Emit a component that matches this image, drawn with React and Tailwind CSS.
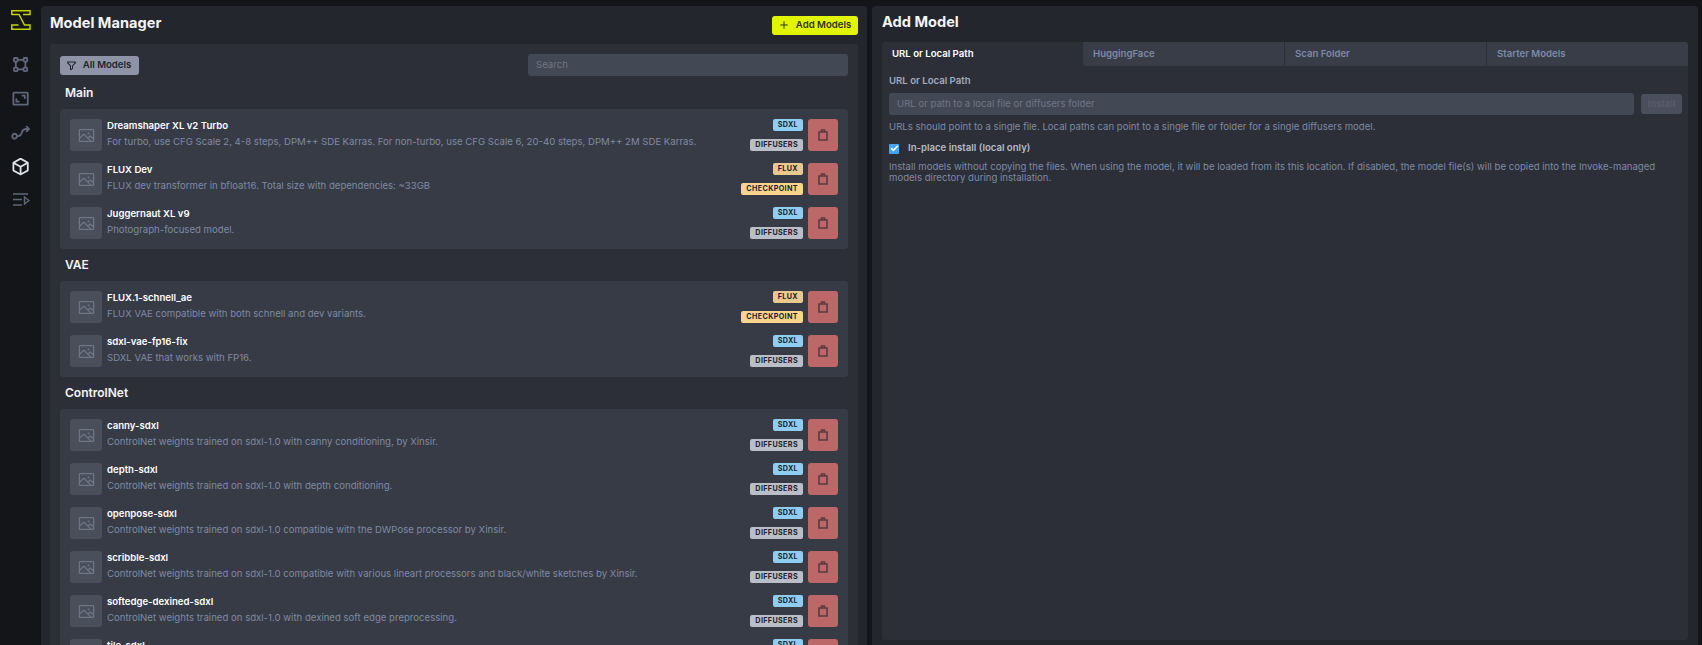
import React from 'react'
import { PiBoundingBoxBold, PiCubeBold, PiFlowArrowBold, PiFrameCornersBold, PiFunnelBold, PiImage, PiPlusBold } from 'react-icons/pi'
import { Check } from 'lucide-react'

const groups = [
  {
    title: 'Main',
    models: [
      { name: 'Dreamshaper XL v2 Turbo', desc: 'For turbo, use CFG Scale 2, 4-8 steps, DPM++ SDE Karras. For non-turbo, use CFG Scale 6, 20-40 steps, DPM++ 2M SDE Karras.', base: 'SDXL', format: 'DIFFUSERS' },
      { name: 'FLUX Dev', desc: 'FLUX dev transformer in bfloat16. Total size with dependencies: ~33GB', base: 'FLUX', format: 'CHECKPOINT' },
      { name: 'Juggernaut XL v9', desc: 'Photograph-focused model.', base: 'SDXL', format: 'DIFFUSERS' },
    ],
  },
  {
    title: 'VAE',
    models: [
      { name: 'FLUX.1-schnell_ae', desc: 'FLUX VAE compatible with both schnell and dev variants.', base: 'FLUX', format: 'CHECKPOINT' },
      { name: 'sdxl-vae-fp16-fix', desc: 'SDXL VAE that works with FP16.', base: 'SDXL', format: 'DIFFUSERS' },
    ],
  },
  {
    title: 'ControlNet',
    models: [
      { name: 'canny-sdxl', desc: 'ControlNet weights trained on sdxl-1.0 with canny conditioning, by Xinsir.', base: 'SDXL', format: 'DIFFUSERS' },
      { name: 'depth-sdxl', desc: 'ControlNet weights trained on sdxl-1.0 with depth conditioning.', base: 'SDXL', format: 'DIFFUSERS' },
      { name: 'openpose-sdxl', desc: 'ControlNet weights trained on sdxl-1.0 compatible with the DWPose processor by Xinsir.', base: 'SDXL', format: 'DIFFUSERS' },
      { name: 'scribble-sdxl', desc: 'ControlNet weights trained on sdxl-1.0 compatible with various lineart processors and black/white sketches by Xinsir.', base: 'SDXL', format: 'DIFFUSERS' },
      { name: 'softedge-dexined-sdxl', desc: 'ControlNet weights trained on sdxl-1.0 with dexined soft edge preprocessing.', base: 'SDXL', format: 'DIFFUSERS' },
      { name: 'tile-sdxl', desc: 'ControlNet weights trained on sdxl-1.0 with tile conditioning.', base: 'SDXL', format: 'DIFFUSERS' },
    ],
  },
]

const tagColors = {
  SDXL: 'bg-[#90cdf4]',
  FLUX: 'bg-[#e8c98f]',
  DIFFUSERS: 'bg-[#b9bec9]',
  CHECKPOINT: 'bg-[#fbd38d]',
}

function Tag({ label }) {
  return (
    <span className={`h-3 flex items-center px-[5px] rounded-[2px] text-[7.2px] leading-none font-bold tracking-[0.05em] text-[#1e222c] ${tagColors[label]}`}>
      {label}
    </span>
  )
}

function TrashIcon() {
  return (
    <svg width="10" height="12" viewBox="0 0 10 12" fill="none" stroke="currentColor" strokeWidth="1.6">
      <path d="M1 3 H9 V11 H1 Z M3.5 3 V1 H6.5 V3" />
    </svg>
  )
}

function ModelRow({ model }) {
  return (
    <div className="flex gap-[5px] h-8 shrink-0">
      <div className="w-8 h-8 shrink-0 rounded-[3px] bg-[#4a4f5c] flex items-center justify-center text-[#6f7686]">
        <PiImage size={19} />
      </div>
      <div className="flex-1 min-w-0 flex flex-col">
        <div className="text-[9.6px] leading-[12px] font-semibold text-white h-[14px] pt-[1px]">{model.name}</div>
        <div className="text-[9.6px] leading-[12px] text-[#7f8aa3] mt-[3px] truncate">{model.desc}</div>
      </div>
      <div className="flex flex-col items-end justify-between">
        <Tag label={model.base} />
        <Tag label={model.format} />
      </div>
      <button className="w-[30px] h-8 rounded-[3px] bg-[#bd6868] flex items-center justify-center text-[#5b3a40]">
        <TrashIcon />
      </button>
    </div>
  )
}

function Logo() {
  return (
    <svg width="20" height="20" viewBox="0 0 20 20" fill="none" stroke="#c4d400" strokeWidth="1.5">
      <path d="M0.8 5 V0.8 H19 V4.5 H12 M0.8 4.5 H8 L13.5 15 H19 V19.2 H0.8 V15 H7.5" />
    </svg>
  )
}

function QueueIcon() {
  return (
    <svg width="19" height="19" viewBox="0 0 19 19" fill="none" stroke="currentColor" strokeWidth="1.4">
      <path d="M2 4 H17 M2 9.5 H11 M2 15 H11" />
      <path d="M13.5 7 L18 10.5 L13.5 14 Z" />
    </svg>
  )
}

function App() {
  return (
    <div className="h-screen w-full overflow-hidden flex bg-[#131519] font-['Inter',sans-serif]">
      <nav className="w-[41px] shrink-0 flex flex-col items-center pt-[10px] text-[#5f6778]">
        <Logo />
        <div className="flex flex-col items-center gap-[14.55px] mt-[25.4px]">
          <PiBoundingBoxBold size={19.2} />
          <PiFrameCornersBold size={19.2} />
          <PiFlowArrowBold size={19.2} />
          <PiCubeBold size={19.2} className="text-[#dfe3ea]" />
          <QueueIcon />
        </div>
      </nav>

      <div className="flex-1 min-w-0 flex gap-[5px] pt-[6px] pr-1">
        <section className="w-[826px] shrink-0 h-[700px] rounded-t-[4px] bg-[#23262d] px-[9px]">
          <header className="h-[38px] flex items-center justify-between">
            <h1 className="text-[14.6px] font-bold text-[#f3f4f6] leading-none -mt-[3px]">Model Manager</h1>
            <button className="h-[19px] w-[86px] rounded-[3px] bg-[#e2f500] flex items-center justify-center gap-[7px] text-[9.6px] font-semibold text-[#2c3314]">
              <PiPlusBold size={10} />
              Add Models
            </button>
          </header>
          <div className="bg-[#2c2f38] rounded-[3px] px-[10px] h-[660px] overflow-hidden">
            <div className="flex items-center justify-between pt-[10px] pb-[1px]">
              <button className="h-[19px] w-[79px] rounded-[3px] bg-[#8e94a6] flex items-center justify-center gap-[6px] pr-[2px] text-[9.6px] font-semibold text-[#20242e]">
                <PiFunnelBold size={11} />
                All Models
              </button>
              <div className="w-[320px] h-[22px] rounded-[3px] bg-[#434855] flex items-center px-2 text-[9.6px] text-[#6e7686]">Search</div>
            </div>
            {groups.map((group) => (
              <div key={group.title}>
                <h2 className="h-8 flex items-center px-[5px] text-[12px] font-semibold text-[#f3f4f6]">{group.title}</h2>
                <div className="bg-[#373b45] rounded-[3px] p-[10px] flex flex-col gap-3">
                  {group.models.map((model) => (
                    <ModelRow key={model.name} model={model} />
                  ))}
                </div>
              </div>
            ))}
          </div>
        </section>

        <section className="flex-1 min-w-0 h-[700px] rounded-t-[4px] bg-[#23262d] px-[10px]">
          <header className="h-[36px] flex items-center pb-[3px]">
            <h1 className="text-[14.6px] font-bold text-[#f3f4f6] leading-none">Add Model</h1>
          </header>
          <div className="bg-[#2c2f38] rounded-[3px] h-[598px]">
            <div className="flex h-6 text-[9.6px] font-semibold">
              <div className="flex-1 flex items-center px-[10px] text-white">URL or Local Path</div>
              <div className="flex-1 flex items-center px-[10px] bg-[#393d48] rounded-bl-[4px] text-[#7f8aa3] border-r border-[#2c2f38]">HuggingFace</div>
              <div className="flex-1 flex items-center px-[10px] bg-[#393d48] text-[#7f8aa3] border-r border-[#2c2f38]">Scan Folder</div>
              <div className="flex-1 flex items-center px-[10px] bg-[#393d48] rounded-tr-[3px] text-[#7f8aa3]">Starter Models</div>
            </div>
            <div className="pl-[7px] pr-[6px] pt-[8px]">
              <div className="text-[9.6px] leading-[13px] font-semibold text-[#a3abbc]">URL or Local Path</div>
              <div className="flex items-center gap-[7px] mt-[6px]">
                <div className="flex-1 h-[22px] rounded-[3px] bg-[#434855] flex items-center px-2 text-[9.6px] text-[#6e7686]">URL or path to a local file or diffusers folder</div>
                <button className="w-[41px] h-5 rounded-[3px] bg-[#4a4f5c] text-[9.6px] font-semibold text-[#575d6c]">Install</button>
              </div>
              <p className="text-[9.6px] leading-[13px] text-[#7f8aa3] mt-[5px]">URLs should point to a single file. Local paths can point to a single file or folder for a single diffusers model.</p>
              <div className="flex items-center gap-[9px] mt-[9px] h-[13px]">
                <span className="w-[10px] h-[10px] rounded-[1px] bg-[#42a5f0] flex items-center justify-center text-white">
                  <Check size={9} strokeWidth={4} />
                </span>
                <span className="text-[9.6px] font-semibold text-[#b5bcc9]">In-place install (local only)</span>
              </div>
              <p className="text-[9.6px] leading-[11px] text-[#7f8aa3] mt-[6px]">Install models without copying the files. When using the model, it will be loaded from its this location. If disabled, the model file(s) will be copied into the Invoke-managed models directory during installation.</p>
            </div>
          </div>
        </section>
      </div>
    </div>
  )
}

export default App
